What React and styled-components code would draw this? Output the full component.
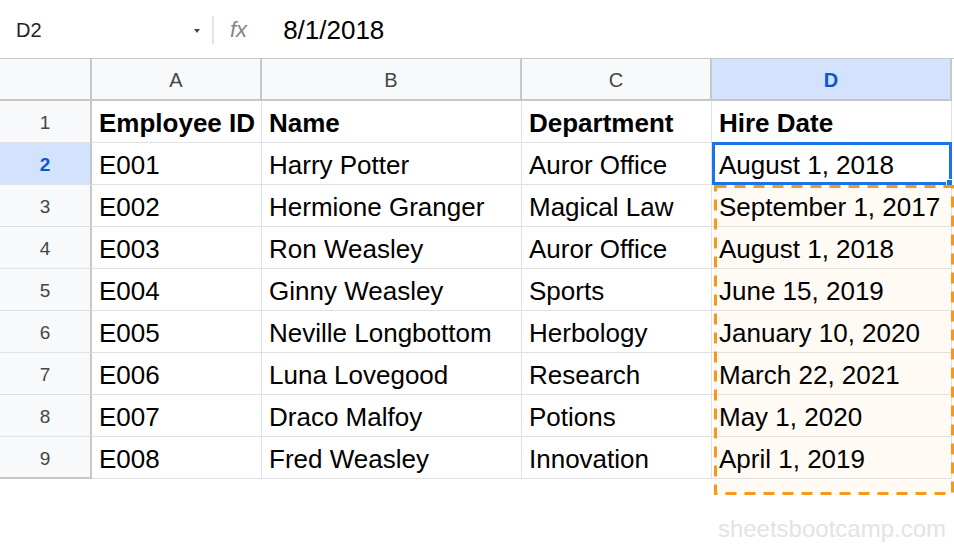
import React from "react";
import styled, { createGlobalStyle } from "styled-components";

const GlobalStyle = createGlobalStyle`
    body {
        margin: 0;
        background: #ffffff;
        font-family: "Liberation Sans", Arial, sans-serif;
    }
`

const Page = styled.div`
    width: 954px;
    height: 546px;
    overflow: hidden;
    display: flex;
    flex-direction: column;
`

const FormulaBar = styled.div`
    height: 59px;
    display: flex;
    align-items: center;
    box-sizing: border-box;
    padding-top: 2px;
    border-bottom: 1px solid #c7c7c7;
`
const NameBox = styled.div`
    width: 212px;
    box-sizing: border-box;
    padding: 0 12px 0 16px;
    display: flex;
    align-items: center;
    justify-content: space-between;
    font-size: 20px;
    color: #1f1f1f;
`
const Caret = styled.span`
    width: 0;
    height: 0;
    border-left: 3px solid transparent;
    border-right: 3px solid transparent;
    border-top: 4px solid #444746;
    margin-top: 2px;
`
const Divider = styled.div`
    width: 2px;
    height: 28px;
    background: #e3e3e3;
`
const Fx = styled.span`
    font-style: italic;
    font-size: 22px;
    color: #80868b;
    margin: 0 36px 0 16px;
`
const FormulaValue = styled.span`
    font-size: 26px;
    color: #000;
`

const Sheet = styled.div`
    position: relative;
    display: grid;
    grid-template-columns: 92px 170px 260px 190px 240px;
    grid-auto-rows: 42px;
`
const ColHeader = styled.div`
    box-sizing: border-box;
    display: flex;
    align-items: center;
    justify-content: center;
    padding-top: 2px;
    background: ${p => p.$active ? '#d3e3fd' : '#f8f9fa'};
    color: ${p => p.$active ? '#0b57d0' : '#444746'};
    font-weight: ${p => p.$active ? 700 : 400};
    font-size: 20px;
    border-right: 2px solid #c7c7c7;
    border-bottom: 2px solid #c7c7c7;
`
const RowHeader = styled(ColHeader)`
    font-size: 19px;
    padding-top: 3px;
    border-bottom: 1px solid ${p => p.$last ? '#c7c7c7' : '#e1e1e1'};
    border-bottom-width: ${p => p.$last ? '2px' : '1px'};
`
const Cell = styled.div`
    position: relative;
    box-sizing: border-box;
    display: flex;
    align-items: center;
    padding: 3px 0 0 7px;
    font-size: 26px;
    color: #000;
    font-weight: ${p => p.$bold ? 700 : 400};
    white-space: nowrap;
    border-right: 1px solid #e1e1e1;
    border-bottom: 1px solid #e1e1e1;
    z-index: 1;
`
const Selection = styled.div`
    position: absolute;
    left: 0;
    top: -1px;
    right: -1px;
    bottom: -1px;
    border: 3px solid #1a73e8;
    pointer-events: none;
`
const Handle = styled.div`
    position: absolute;
    right: -3px;
    bottom: -3px;
    width: 5px;
    height: 5px;
    background: #1a73e8;
    border-left: 1px solid #fff;
    border-top: 1px solid #fff;
`
const CopyRange = styled.div`
    position: absolute;
    left: 714px;
    top: 126px;
    width: 240px;
    height: 310px;
    background: #fffaf4;
    z-index: 0;
`
const Dashes = styled.svg`
    position: absolute;
    left: 714px;
    top: 126px;
    z-index: 2;
    pointer-events: none;
`

const Footer = styled.div`
    display: flex;
    justify-content: flex-end;
    padding: 36px 8px 0 0;
    font-size: 24px;
    color: #e3e3e3;
`

const columns = ["A", "B", "C", "D"];
const header = ["Employee ID", "Name", "Department", "Hire Date"];
const rows = [
    ["E001", "Harry Potter", "Auror Office", "August 1, 2018"],
    ["E002", "Hermione Granger", "Magical Law", "September 1, 2017"],
    ["E003", "Ron Weasley", "Auror Office", "August 1, 2018"],
    ["E004", "Ginny Weasley", "Sports", "June 15, 2019"],
    ["E005", "Neville Longbottom", "Herbology", "January 10, 2020"],
    ["E006", "Luna Lovegood", "Research", "March 22, 2021"],
    ["E007", "Draco Malfoy", "Potions", "May 1, 2020"],
    ["E008", "Fred Weasley", "Innovation", "April 1, 2019"],
];

function App() {
    return (
        <Page>
            <GlobalStyle/>
            <FormulaBar>
                <NameBox>D2<Caret/></NameBox>
                <Divider/>
                <Fx>fx</Fx>
                <FormulaValue>8/1/2018</FormulaValue>
            </FormulaBar>
            <Sheet>
                <CopyRange/>
                <Dashes width="240" height="310">
                    <rect x="1.5" y="1.5" width="237" height="307" fill="none"
                          stroke="#f7981d" strokeWidth="3" strokeDasharray="11 8"/>
                </Dashes>
                <ColHeader/>
                {columns.map(c => <ColHeader key={c} $active={c === "D"}>{c}</ColHeader>)}
                <RowHeader>1</RowHeader>
                {header.map(h => <Cell key={h} $bold>{h}</Cell>)}
                {rows.map((r, i) => (
                    <React.Fragment key={i}>
                        <RowHeader $active={i === 0} $last={i === rows.length - 1}>{i + 2}</RowHeader>
                        {r.map((v, j) => (
                            <Cell key={j}>
                                {v}
                                {i === 0 && j === 3 && <Selection><Handle/></Selection>}
                            </Cell>
                        ))}
                    </React.Fragment>
                ))}
            </Sheet>
            <Footer>sheetsbootcamp.com</Footer>
        </Page>
    );
}

export default App;
